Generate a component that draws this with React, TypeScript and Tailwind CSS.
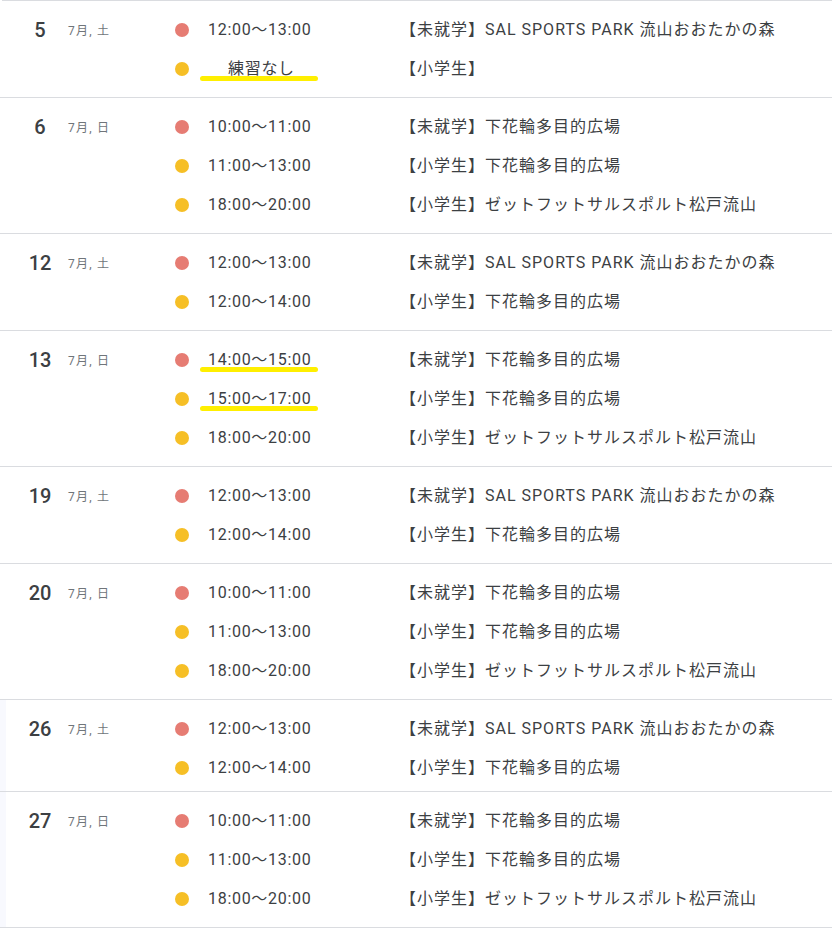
import React from 'react';

type Ev = { color: 'red' | 'yellow'; time: string; title: string; mark?: boolean; indent?: boolean };
type Day = { day: string; wd: string; events: Ev[]; tight?: boolean };

const S = 'SAL SPORTS PARK 流山おおたかの森';
const H = '下花輪多目的広場';
const Z = 'ゼットフットサルスポルト松戸流山';

const days: Day[] = [
  { day: '5', wd: '土', events: [
    { color: 'red', time: '12:00〜13:00', title: `【未就学】${S}` },
    { color: 'yellow', time: '練習なし', title: '【小学生】', mark: true, indent: true },
  ] },
  { day: '6', wd: '日', events: [
    { color: 'red', time: '10:00〜11:00', title: `【未就学】${H}` },
    { color: 'yellow', time: '11:00〜13:00', title: `【小学生】${H}` },
    { color: 'yellow', time: '18:00〜20:00', title: `【小学生】${Z}` },
  ] },
  { day: '12', wd: '土', events: [
    { color: 'red', time: '12:00〜13:00', title: `【未就学】${S}` },
    { color: 'yellow', time: '12:00〜14:00', title: `【小学生】${H}` },
  ] },
  { day: '13', wd: '日', events: [
    { color: 'red', time: '14:00〜15:00', title: `【未就学】${H}`, mark: true },
    { color: 'yellow', time: '15:00〜17:00', title: `【小学生】${H}`, mark: true },
    { color: 'yellow', time: '18:00〜20:00', title: `【小学生】${Z}` },
  ] },
  { day: '19', wd: '土', events: [
    { color: 'red', time: '12:00〜13:00', title: `【未就学】${S}` },
    { color: 'yellow', time: '12:00〜14:00', title: `【小学生】${H}` },
  ] },
  { day: '20', wd: '日', events: [
    { color: 'red', time: '10:00〜11:00', title: `【未就学】${H}` },
    { color: 'yellow', time: '11:00〜13:00', title: `【小学生】${H}` },
    { color: 'yellow', time: '18:00〜20:00', title: `【小学生】${Z}` },
  ] },
  { day: '26', wd: '土', tight: true, events: [
    { color: 'red', time: '12:00〜13:00', title: `【未就学】${S}` },
    { color: 'yellow', time: '12:00〜14:00', title: `【小学生】${H}` },
  ] },
  { day: '27', wd: '日', events: [
    { color: 'red', time: '10:00〜11:00', title: `【未就学】${H}` },
    { color: 'yellow', time: '11:00〜13:00', title: `【小学生】${H}` },
    { color: 'yellow', time: '18:00〜20:00', title: `【小学生】${Z}` },
  ] },
];

function DaySection({ d }: { d: Day }) {
  return (
    <div className={`flex border-b border-[#dadce0] pt-[9px] ${d.tight ? 'pb-[4px]' : 'pb-[9px]'}`}>
      <div className="w-[175px] shrink-0">
        <div className="flex h-[39px] items-center">
          <span className="w-[40px] ml-[20px] text-center text-[20px] font-medium text-[#3c4043]">{d.day}</span>
          <span className="ml-[8px] mt-[3px] text-[12px] tracking-[1.2px] text-[#70757a]">7月, {d.wd}</span>
        </div>
      </div>
      <div className="flex-1">
        {d.events.map((e, i) => (
          <div key={i} className="flex h-[39px] items-center">
            <span className={`h-[14px] w-[14px] rounded-full ${e.color === 'red' ? 'bg-[#e67c73]' : 'bg-[#f6bf26]'}`} />
            <div className="relative ml-[19px] w-[192px] shrink-0 self-stretch flex items-center">
              {e.mark && (
                <span className="absolute left-[-8px] top-[27px] h-[5px] w-[118px] rounded-full bg-[#ffef00]" />
              )}
              <span className={`relative text-[16px] tracking-[0.7px] text-[#3c4043] ${e.indent ? 'pl-[20px]' : ''}`}>{e.time}</span>
            </div>
            <span className="text-[16px] tracking-[1px] text-[#3c4043] whitespace-nowrap">{e.title}</span>
          </div>
        ))}
      </div>
    </div>
  );
}

export default function App() {
  return (
    <div
      className="w-[832px] h-[934px] bg-white overflow-hidden"
      style={{ fontFamily: 'Roboto, "Noto Sans CJK JP", sans-serif' }}
    >
      <div className="border-t border-[#dadce0] ml-[2px]" />
      {days.slice(0, 6).map((d) => (
        <DaySection key={d.day} d={d} />
      ))}
      <div className="bg-[linear-gradient(to_right,#f8f9fe_6px,transparent_6px)]">
        {days.slice(6).map((d) => (
          <DaySection key={d.day} d={d} />
        ))}
      </div>
    </div>
  );
}
